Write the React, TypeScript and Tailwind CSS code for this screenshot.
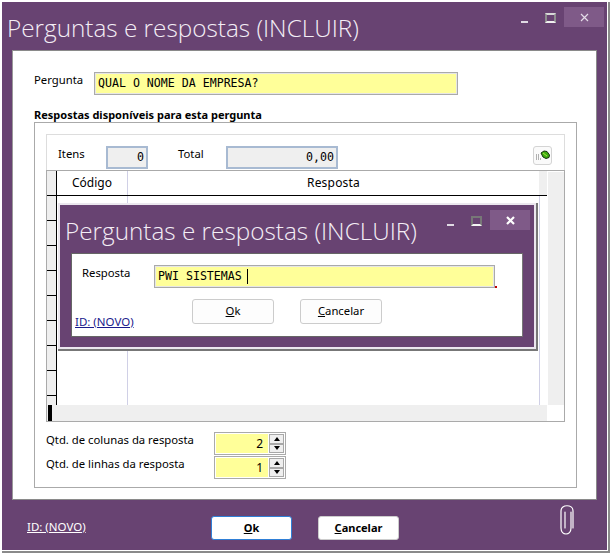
import React from "react";

const UI = "font-['Noto_Sans',sans-serif]";
const MONO = "font-['DejaVu_Sans_Mono',monospace]";
const TITLE = "font-['Open_Sans',sans-serif] font-light text-[#f4eef6] whitespace-nowrap";

function WinButtons({ active }: { active?: boolean }) {
  return (
    <div className="flex items-start">
      <div className="mt-[14px] h-[2px] w-[7px] bg-[#e0dae4]" />
      <div className={`ml-[17px] mt-[6px] h-[10px] w-[11px] border-x-[2px] border-b-[2px] border-t-[2px] ${active ? "border-x-[#777] border-t-[#777] border-b-[#f4f4f4]" : "border-x-[#8d8d8d] border-t-[#d8d8d8] border-b-[#f0f0f0]"}`} />
      <div className="ml-[8px] flex h-[20px] w-[40px] items-center justify-center bg-[#7f5a88]">
        <svg width="9" height="9" viewBox="0 0 9 9">
          <path d="M1 1 L8 8 M8 1 L1 8" stroke={active ? "#ffffff" : "#e4dce8"} strokeWidth={active ? 2.2 : 1.2} fill="none" />
        </svg>
      </div>
    </div>
  );
}

function Spin({ value }: { value: string }) {
  return (
    <div className="flex h-[23px] w-[72px] border border-[#aaa] bg-white p-[1px]">
      <div className={`flex w-[52px] items-center justify-end bg-[#ffff99] pr-[5px] text-[12px] text-black ${UI}`}>{value}</div>
      <div className="ml-[1px] flex w-[15px] flex-col">
        <div className="flex flex-1 items-center justify-center border border-[#a8a8a8] bg-[#efefef]">
          <div className="h-0 w-0 border-x-[3px] border-b-[4px] border-x-transparent border-b-black" />
        </div>
        <div className="flex flex-1 items-center justify-center border border-[#a8a8a8] bg-[#efefef]">
          <div className="h-0 w-0 border-x-[3px] border-t-[4px] border-x-transparent border-t-black" />
        </div>
      </div>
    </div>
  );
}

function Grid() {
  return (
    <div className="flex h-[252px] flex-col border border-[#aaa] bg-white">
      <div className="flex min-h-0 flex-1">
        <div className="flex w-[500px] flex-col">
          <div className="flex h-[25px] border-b-[1px] border-b-black">
            <div className="w-[9px] bg-[#efefef]" />
            <div className="w-[1px] bg-black" />
            <div className={`flex w-[71px] items-center justify-center border-r border-[#d0d0e6] text-[12px] text-black ${UI}`}>Código</div>
            <div className={`flex flex-1 items-center justify-center text-[12px] tracking-[0.2px] text-black ${UI}`}>Resposta</div>
            <div className="w-[8px] bg-[#efefef]" />
          </div>
          <div className="flex flex-1">
            <div className="flex w-[9px] flex-col bg-[#efefef]">
              {[0, 1, 2, 3, 4, 5, 6, 7].map((i) => (
                <div key={i} className="h-[25px] w-[9px] border-b border-black" />
              ))}
            </div>
            <div className="w-[1px] bg-black" />
            <div className="w-[71px] border-r border-[#d0d0e6]" />
            <div className="flex-1" />
            <div className="w-[8px] border-l border-[#d0d0e6]" />
          </div>
        </div>
        <div className="ml-[1px] mt-[1px] w-[16px] bg-[#efefef]" />
      </div>
      <div className="flex h-[16px]">
        <div className="flex w-[500px] bg-[#efefef] pl-[1px]">
          <div className="w-[4px] bg-black" />
        </div>
      </div>
    </div>
  );
}

function CleanIcon() {
  return (
    <div className="mr-[12px] flex h-[19px] w-[19px] items-center justify-center rounded-[3px] border border-[#d4d4d4] bg-[#fafafa]">
      <svg width="15" height="11" viewBox="0 0 15 11">
        <path d="M1 5h3M1 7h4M1 9h5" stroke="#666" strokeWidth="1" strokeDasharray="1 1" fill="none" />
        <path d="M6 3 L9 1 L12 1.5 L14.5 5 L14 7.5 L11 8.5 L8 7 Z" fill="#3fae10" stroke="#14300a" strokeWidth="1" />
        <path d="M8 3 L12 6" stroke="#a8e040" strokeWidth="1" />
      </svg>
    </div>
  );
}

function Modal() {
  return (
    <div className="absolute left-[58px] top-[203px] w-[480px] border-b-[2px] border-r-[2px] border-[#777]">
      <div className="border-[2px] border-[#ebe7ee] bg-[#684372]">
        <div className="flex h-[48px] justify-between pl-[5px] pr-[4px]">
          <div className={`pt-[8px] text-[24.3px] leading-[36px] ${TITLE}`}>Perguntas e respostas (INCLUIR)</div>
          <div className="pt-[5px]"><WinButtons active /></div>
        </div>
        <div className="mx-[11px] mb-[10px] h-[84px] border border-[#666] border-r-[#777] bg-white">
          <div className="flex pl-[10px] pt-[11px]">
            <div className={`w-[72px] text-[11.3px] leading-[16px] text-black ${UI}`}>Resposta</div>
            <div className="relative">
              <div className={`flex h-[23px] w-[341px] items-center border border-[#aaa] bg-[#ffff99] pl-[3px] text-[11.6px] text-black shadow-[inset_0_0_0_1px_#e6e6e6] ${MONO}`}>
                PWI SISTEMAS<span className="ml-[5px] h-[15px] w-[1px] bg-black" />
              </div>
              <div className="absolute -right-[2px] bottom-0 h-[2px] w-[2px] bg-[#c00000]" />
            </div>
          </div>
          <div className="relative mt-[11px] flex gap-[26px] pl-[120px]">
            <div className={`flex h-[25px] w-[82px] items-center justify-center rounded-[3px] border border-[#ccc] bg-[#fdfdfd] text-[11.3px] text-black ${UI}`}><span><u>O</u>k</span></div>
            <div className={`flex h-[25px] w-[82px] items-center justify-center rounded-[3px] border border-[#ccc] bg-[#fdfdfd] text-[11.3px] text-black ${UI}`}><span><u>C</u>ancelar</span></div>
            <div className={`absolute left-[3px] top-[15px] text-[11.5px] leading-[16px] text-[#1a1a8c] underline ${UI}`}>ID: (NOVO)</div>
          </div>
        </div>
      </div>
    </div>
  );
}

export default function App() {
  return (
    <div className="relative h-[555px] w-[612px] overflow-hidden bg-white">
      <div className="ml-[2px] w-[608px] pt-[2px]">
        <div className="h-[551px] border-b-[2px] border-r-[2px] border-[#8a8a8a]">
          <div className="h-full border-b border-r border-white bg-[#684372]">
            <div className="flex h-[48px] justify-between pl-[5px] pr-[3px]">
              <div className={`pt-[8px] text-[24.3px] leading-[36px] ${TITLE}`}>Perguntas e respostas (INCLUIR)</div>
              <div className="pt-[5px]"><WinButtons /></div>
            </div>
            <div className="ml-[10px] h-[450px] w-[585px] border border-[#8a8a8a] border-l-[#999] bg-white pl-[21px] pr-[20px]">
              <div className="flex pt-[21px]">
                <div className={`w-[60px] text-[11.3px] leading-[16px] text-black ${UI}`}>Pergunta</div>
                <div className={`flex h-[23px] w-[364px] items-center border border-[#aaa] bg-[#ffff99] pl-[3px] text-[11.6px] text-black shadow-[inset_0_0_0_1px_#e6e6e6] ${MONO}`}>QUAL O NOME DA EMPRESA?</div>
              </div>
              <div className={`mt-[13px] h-[14px] text-[11px] font-bold leading-[14px] text-black ${UI}`}>Respostas disponíveis para esta pergunta</div>
              <div className="h-[366px] w-[543px] border border-[#aaa] px-[11px] pt-[11px]">
                <div className="h-[36px] border-x border-t border-[#ddd]">
                  <div className="flex items-start pl-[11px] pt-[11px]">
                    <div className={`w-[48px] pt-[1px] text-[11.3px] leading-[14px] text-black ${UI}`}>Itens</div>
                    <div className={`flex h-[23px] w-[42px] items-center justify-end border-[2px] border-[#a8bad2] bg-[#efefef] pr-[2px] text-[11.6px] text-black ${MONO}`}>0</div>
                    <div className={`ml-[30px] w-[48px] pt-[1px] text-[11.3px] leading-[14px] text-black ${UI}`}>Total</div>
                    <div className={`flex h-[23px] w-[112px] items-center justify-end border-[2px] border-[#a8bad2] bg-[#efefef] pr-[2px] text-[11.6px] text-black ${MONO}`}>0,00</div>
                    <div className="ml-auto"><CleanIcon /></div>
                  </div>
                </div>
                <Grid />
                <div className="mt-[10px] flex items-start">
                  <div className={`w-[168px] text-[11.3px] leading-[16px] text-black ${UI}`}>Qtd. de colunas da resposta</div>
                  <Spin value="2" />
                </div>
                <div className="mt-[1px] flex items-start">
                  <div className={`w-[168px] text-[11.3px] leading-[16px] text-black ${UI}`}>Qtd. de linhas da resposta</div>
                  <Spin value="1" />
                </div>
              </div>
            </div>
            <div className="relative flex items-start pl-[25px] pt-[16px]">
              <div className={`w-[184px] pt-[3px] text-[11.5px] leading-[16px] text-white underline ${UI}`}>ID: (NOVO)</div>
              <div className={`flex h-[24px] w-[81px] items-center justify-center rounded-[3px] border-[1px] border-[#2f7fd6] bg-white text-[11px] font-bold text-black ${UI}`}><span><u>O</u>k</span></div>
              <div className={`ml-[26px] flex h-[24px] w-[81px] items-center justify-center rounded-[3px] border border-[#ccc] bg-white text-[11px] font-bold text-black ${UI}`}><span><u>C</u>ancelar</span></div>
              <svg className="ml-[159px] -mt-[12px]" width="18" height="33" viewBox="0 0 18 33">
                <path d="M14 8 V24 C14 32 4 32 4 24 V7 C4 0 16 0 16 7 V24 M8 8 V24" transform="translate(-1 0)" stroke="#fff" strokeWidth="1.2" fill="none" strokeLinecap="round" />
              </svg>
            </div>
          </div>
        </div>
      </div>
      <Modal />
    </div>
  );
}
